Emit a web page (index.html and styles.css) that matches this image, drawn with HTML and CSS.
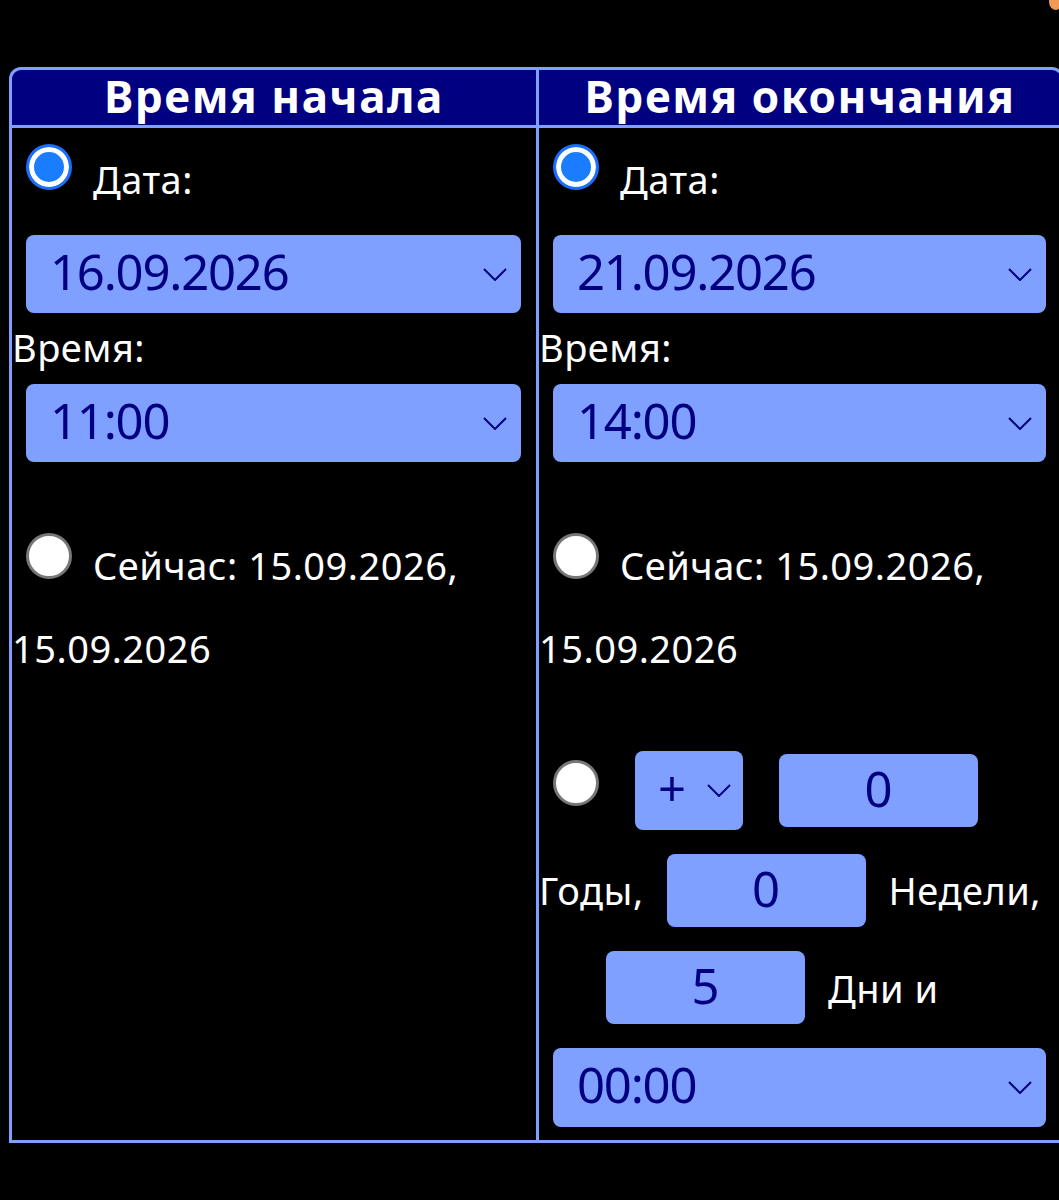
FILE: index.html
```html
<!DOCTYPE html>
<html lang="ru">
<head>
<meta charset="utf-8">
<title>Время</title>
<link rel="stylesheet" href="styles.css">
</head>
<body>
<span class="dot"></span>
<div class="tbl">
  <div class="th">Время начала</div>
  <div class="th">Время окончания</div>

  <div class="td">
    <div class="opt first">
      <span class="radio on"></span>
      <span class="txt t1">Дата:</span>
    </div>
    <div class="sel s-date"><span>16.09.2026</span><svg class="chev" viewBox="0 0 24 13"><polyline points="1,1 12,12 23,1"/></svg></div>
    <div class="lbl">Время:</div>
    <div class="sel s-time"><span>11:00</span><svg class="chev" viewBox="0 0 24 13"><polyline points="1,1 12,12 23,1"/></svg></div>
    <div class="opt now">
      <span class="radio off"></span>
      <span class="txt t2">Сейчас: 15.09.2026,</span>
    </div>
    <div class="lbl wrap">15.09.2026</div>
  </div>

  <div class="td">
    <div class="opt first">
      <span class="radio on"></span>
      <span class="txt t1">Дата:</span>
    </div>
    <div class="sel s-date"><span>21.09.2026</span><svg class="chev" viewBox="0 0 24 13"><polyline points="1,1 12,12 23,1"/></svg></div>
    <div class="lbl">Время:</div>
    <div class="sel s-time"><span>14:00</span><svg class="chev" viewBox="0 0 24 13"><polyline points="1,1 12,12 23,1"/></svg></div>
    <div class="opt now">
      <span class="radio off"></span>
      <span class="txt t2">Сейчас: 15.09.2026,</span>
    </div>
    <div class="lbl wrap">15.09.2026</div>

    <div class="row ra">
      <span class="radio off r3"></span>
      <div class="sign"><span class="plus">+</span><svg class="chev" viewBox="0 0 24 13"><polyline points="1,1 12,12 23,1"/></svg></div>
      <div class="num n-a">0</div>
    </div>
    <div class="row rb">
      <span class="txt tb">Годы,</span>
      <div class="num">0</div>
      <span class="txt tb">Недели,</span>
    </div>
    <div class="row rc">
      <div class="num n-c">5</div>
      <span class="txt tc">Дни и</span>
    </div>
    <div class="sel s-last"><span>00:00</span><svg class="chev" viewBox="0 0 24 13"><polyline points="1,1 12,12 23,1"/></svg></div>
  </div>
</div>
</body>
</html>
```
FILE: styles.css
```css
html, body {
  margin: 0;
  padding: 0;
  background: #000;
  overflow: hidden;
}
body {
  position: relative;
  height: 1200px;
  font-family: "Noto Sans", "Open Sans", sans-serif;
  color: #fff;
}
.dot {
  position: absolute;
  top: -7px;
  right: -3px;
  width: 13px;
  height: 17px;
  border-radius: 50%;
  background: #f19a55;
}
.tbl {
  margin: 67px 0 0 9px;
  width: 1055px;
  box-sizing: border-box;
  border: 3px solid #80a0ff;
  border-radius: 12px 12px 0 0;
  background: #80a0ff;
  display: grid;
  grid-template-columns: 524px 522px;
  column-gap: 3px;
  row-gap: 3px;
  overflow: hidden;
}
.th {
  background: #000080;
  height: 55px;
  box-sizing: border-box;
  padding-bottom: 4px;
  display: flex;
  align-items: center;
  justify-content: center;
  font-weight: 700;
  font-size: 44px;
  line-height: 1;
  letter-spacing: 1.6px;
  color: #fff;
}
.td {
  background: #000;
  height: 1012px;
}
.opt {
  display: flex;
  align-items: flex-start;
  margin-left: 14px;
}
.first { margin-top: 16px; }
.now { margin-top: 71px; }
.radio {
  flex: none;
  width: 46px;
  height: 46px;
  box-sizing: border-box;
  border-radius: 50%;
}
.radio.on {
  background: #1a7dff;
  border: 3px solid #1a6fff;
  box-shadow: inset 0 0 0 5px #fff;
}
.radio.off {
  background: #fff;
  border: 3px solid #777;
}
.txt, .lbl {
  font-size: 38px;
  line-height: 46px;
  letter-spacing: 0.5px;
  white-space: nowrap;
}
.t1 { margin: 12px 0 0 21px; }
.t2 { margin: 9px 0 0 21px; }
.lbl { margin-top: 11px; }
.lbl.wrap { margin-top: 37px; }
.sel {
  margin: 0 15px 0 14px;
  height: 78px;
  box-sizing: border-box;
  border-radius: 8px;
  background: #80a0ff;
  color: #000080;
  font-size: 49px;
  letter-spacing: -1.2px;
  line-height: 1;
  display: flex;
  align-items: center;
  justify-content: space-between;
  padding: 0 14px 6px 24px;
}
.s-date { margin-top: 33px; }
.s-time { margin-top: 14px; }
.s-last { margin-top: 24px; height: 79px; }
.chev {
  width: 24px;
  height: 13px;
  flex: none;
  margin-top: 6px;
}
.chev polyline {
  fill: none;
  stroke: #000080;
  stroke-width: 2;
}
.row {
  display: flex;
  align-items: flex-start;
}
.ra { margin-top: 80px; }
.r3 { margin: 9px 0 0 14px; }
.sign {
  margin-left: 36px;
  width: 108px;
  height: 79px;
  box-sizing: border-box;
  border-radius: 8px;
  background: #80a0ff;
  color: #000080;
  display: flex;
  align-items: center;
  justify-content: space-between;
  padding: 0 12px 6px 23px;
  font-size: 49px;
  line-height: 1;
}
.num {
  width: 199px;
  height: 73px;
  box-sizing: border-box;
  border-radius: 8px;
  background: #80a0ff;
  color: #000080;
  font-size: 49px;
  line-height: 1;
  display: flex;
  align-items: center;
  justify-content: center;
  padding-bottom: 5px;
}
.n-a { margin: 3px 0 0 36px; }
.rb { margin-top: 24px; gap: 23px; }
.tb { margin-top: 13px; }
.rc { margin-top: 24px; }
.n-c { margin-left: 67px; }
.tc { margin: 14px 0 0 23px; }
```
